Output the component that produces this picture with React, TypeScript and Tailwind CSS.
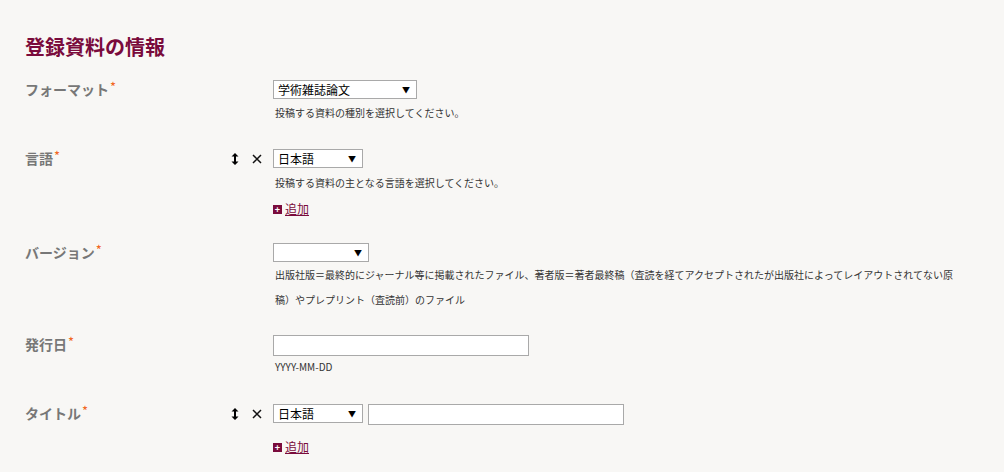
import type { ReactNode } from "react";

const font = '"Noto Sans CJK JP", "Liberation Sans", sans-serif';

function Label({ children }: { children: ReactNode }) {
    return (
        <span className="text-[14px] font-bold text-[#777]">
            {children}
            <sup className="relative -top-[3px] ml-[1px] text-[13px] font-normal text-[#f26522]">*</sup>
        </span>
    );
}

function Controls() {
    return (
        <div className="flex items-center gap-[13px] pr-[11px]">
            <svg width="8" height="12" viewBox="0 0 8 12" className="text-black">
                <path d="M4 0 L7.5 3.5 H5 V8.5 H7.5 L4 12 L0.5 8.5 H3 V3.5 H0.5 Z" fill="currentColor" />
            </svg>
            <svg width="10" height="10" viewBox="0 0 10 10">
                <path d="M1 1 L9 9 M9 1 L1 9" stroke="#111" strokeWidth="1.5" />
            </svg>
        </div>
    );
}

function FakeSelect({ value, width }: { value: string; width: string }) {
    return (
        <div className={`flex h-[19px] ${width} items-center justify-between border border-[#a9a9a9] bg-white pl-[4px] pr-[6px] text-[12px] text-black`}>
            <span>{value}</span>
            <span className="text-[8px]">▼</span>
        </div>
    );
}

function AddLink() {
    return (
        <div className="flex items-center gap-[3px] text-[12px] leading-[16px]">
            <span className="flex h-[9px] w-[9px] items-center justify-center bg-[#7a0b3c] text-[9px] font-bold leading-none text-white">+</span>
            <a className="text-[#7a0b3c] underline">追加</a>
        </div>
    );
}

function Row({ label, controls, children, className }: { label: string; controls?: boolean; children: ReactNode; className?: string }) {
    return (
        <div className={`flex ${className ?? ""}`}>
            <div className="flex h-[19px] w-[248px] items-center justify-between">
                <Label>{label}</Label>
                {controls && <Controls />}
            </div>
            <div className="flex-1">{children}</div>
        </div>
    );
}

export default function App() {
    return (
        <div className="min-h-[472px] bg-[#f8f7f5] px-[25px] pt-[33px]" style={{ fontFamily: font }}>
            <h2 className="text-[20px] font-bold leading-[28px] text-[#7a0b3c]">登録資料の情報</h2>

            <Row label="フォーマット" className="mt-[19px]">
                <FakeSelect value="学術雑誌論文" width="w-[144px]" />
                <p className="mt-[7px] pl-[2px] text-[10px] leading-[14px] text-[#333]">投稿する資料の種別を選択してください。</p>
            </Row>

            <Row label="言語" controls className="mt-[29px]">
                <FakeSelect value="日本語" width="w-[90px]" />
                <p className="mt-[8px] pl-[2px] text-[10px] leading-[14px] text-[#333]">投稿する資料の主となる言語を選択してください。</p>
                <div className="mt-[11px]">
                    <AddLink />
                </div>
            </Row>

            <Row label="バージョン" className="mt-[26px]">
                <FakeSelect value="" width="w-[96px]" />
                <p className="w-[686px] pl-[2px] text-[10px] leading-[25px] text-[#333]">
                    出版社版＝最終的にジャーナル等に掲載されたファイル、著者版＝著者最終稿（査読を経てアクセプトされたが出版社によってレイアウトされてない原稿）やプレプリント（査読前）のファイル
                </p>
            </Row>

            <Row label="発行日" className="mt-[23px]">
                <input className="block h-[21px] w-[256px] border border-[#a9a9a9] bg-white" />
                <p className="mt-[4px] pl-[2px] text-[10px] leading-[14px] text-[#333]">YYYY-MM-DD</p>
            </Row>

            <Row label="タイトル" controls className="mt-[30px]">
                <div className="flex items-start gap-[5px]">
                    <FakeSelect value="日本語" width="w-[90px]" />
                    <input className="block h-[21px] w-[256px] border border-[#a9a9a9] bg-white" />
                </div>
                <div className="mt-[14px]">
                    <AddLink />
                </div>
            </Row>
        </div>
    );
}
